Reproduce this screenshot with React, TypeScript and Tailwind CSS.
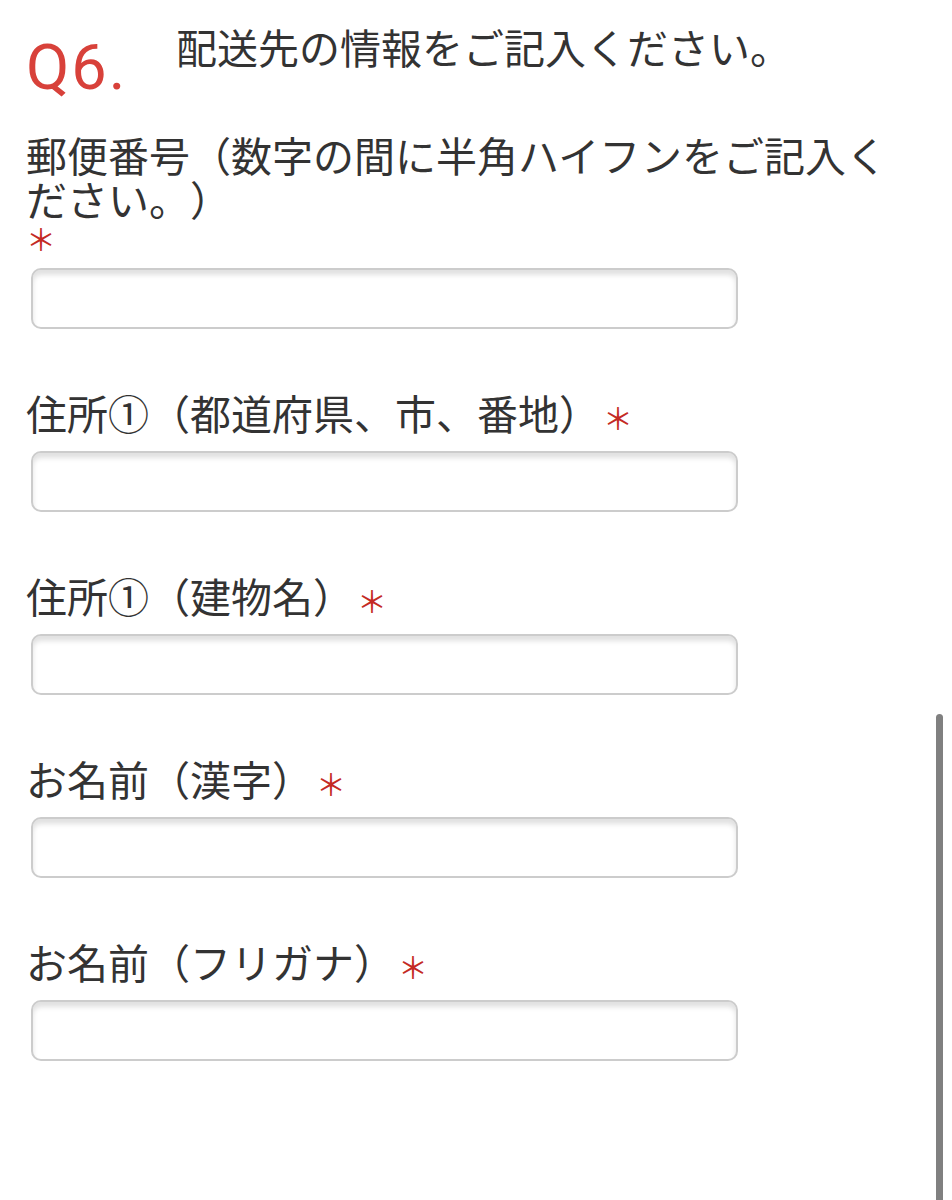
import React from "react";

const jp = "font-['Noto_Sans_CJK_JP','Noto_Sans',sans-serif] [text-spacing-trim:space-all]";

function Req({ className = "" }: { className?: string }) {
  return (
    <span className={`text-[#c42a24] text-[30px] leading-none ${className}`}>＊</span>
  );
}

function Field({ label }: { label: string }) {
  return (
    <div className="mt-[61px]">
      <div className={`text-[41px] leading-[44px] text-[#333] ${jp}`}>
        {label}
        <Req className="ml-[3px]" />
      </div>
      <Input />
    </div>
  );
}

function Input() {
  return (
    <div className="mt-[17px] ml-[5px] w-[707px] h-[61px] rounded-[10px] border-2 border-[#cccccc] bg-white shadow-[inset_0_5px_5px_rgba(0,0,0,0.12)]" />
  );
}

export default function App() {
  return (
    <div className={`relative min-h-[1200px] w-[952px] bg-white overflow-hidden ${jp}`}>
      <div className="pl-[26px] pt-[24px]">
        <div className="flex items-start">
          <div className="w-[150px] mt-[12px] text-[63px] leading-none tracking-[2px] text-[#d8413a] font-['Roboto',sans-serif]">
            Q6.
          </div>
          <div className={`text-[41px] leading-[44px] text-[#333] ${jp}`}>
            配送先の情報をご記入ください。
          </div>
        </div>

        <div className="mt-[33px] w-[880px]">
          <div className={`text-[41px] leading-[44px] text-[#333] ${jp}`}>
            郵便番号（数字の間に半角ハイフンをご記入ください。）
          </div>
          <div className="h-[31px] leading-[28px] pt-[3px]">
            <Req />
          </div>
          <Input />
        </div>

        <Field label="住所①（都道府県、市、番地）" />
        <Field label="住所①（建物名）" />
        <Field label="お名前（漢字）" />
        <Field label="お名前（フリガナ）" />
      </div>

      <div className="absolute left-[936px] top-[714px] w-[7px] h-[500px] rounded-full bg-[#808080]" />
    </div>
  );
}
